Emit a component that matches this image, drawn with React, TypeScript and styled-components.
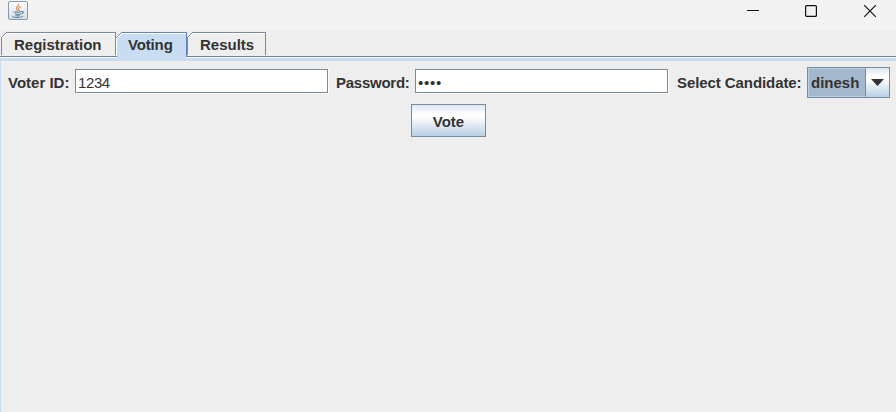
import React from "react";
import styled, { createGlobalStyle } from "styled-components";

const Global = createGlobalStyle`
  * { box-sizing: border-box; }
  body { margin: 0; background: #eeeeee; overflow: hidden; }
`;

const Frame = styled.div`
  width: 896px;
  height: 412px;
  display: flex;
  flex-direction: column;
  background: #eeeeee;
  color: #333333;
  font: bold 15px/18px "Liberation Sans", Arial, sans-serif;
`;

const TitleBar = styled.header`
  height: 30px;
  flex: none;
  display: flex;
  justify-content: space-between;
  padding: 1px 19px 0 8px;
  background: #f3f3f3;
`;

const WindowButtons = styled.div`
  display: flex;
  gap: 44px;
  padding-top: 3px;
`;

const WindowButton = styled.button`
  width: 14px;
  height: 14px;
  padding: 0;
  border: 0;
  background: none;
  svg { display: block; }

  &:last-child { margin-left: 1px; }
`;

const TabStrip = styled.nav`
  height: 26px;
  flex: none;
  display: flex;
  align-items: flex-start;
  padding: 2px 0 0 1px;
`;

const Tab = styled.button<{ $width: number; $active?: boolean }>`
  position: relative;
  display: flex;
  align-items: flex-start;
  width: ${(p) => p.$width}px;
  height: ${(p) => (p.$active ? 25 : 23)}px;
  padding: 3px 0 0 ${(p) => (p.$active ? 12 : 13)}px;
  border: 0;
  border-top: 1px solid ${(p) => (p.$active ? "#6382bf" : "#7a8a99")};
  border-right: 1px solid ${(p) => (p.$active ? "#6382bf" : "#7a8a99")};
  background: ${(p) => (p.$active ? "#c8ddf2" : "#eeeeee")};
  box-shadow: inset 1px 1px #ffffff;
  color: inherit;
  font: inherit;
  letter-spacing: ${(p) => (p.$active ? "-0.15px" : "0")};
  white-space: nowrap;

  &::before {
    content: "";
    position: absolute;
    left: 0;
    top: -1px;
    width: 6px;
    height: 6px;
    background: linear-gradient(
      135deg,
      #eeeeee 42%,
      #7a8a99 43% 53%,
      #ffffff 54% 66%,
      transparent 67%
    );
  }

  &::after {
    content: "";
    position: absolute;
    left: 0;
    top: 5px;
    bottom: 0;
    width: 1px;
    background: ${(p) => (p.$active ? "transparent" : "#7a8a99")};
  }
`;

const TabLine = styled.div`
  height: 5px;
  flex: none;
  background: linear-gradient(
    #6c7fa8 0 1px,
    #ffffff 1px 2px,
    #c8ddf2 2px 5px
  );
  position: relative;

  /* The selected tab runs through the line into the panel's edge. */
  &::before {
    content: "";
    position: absolute;
    left: 117px;
    top: -1px;
    width: 69px;
    height: 5px;
    background: #c8ddf2;
  }
`;

const Panel = styled.main`
  flex: 1;
  border-left: 1px solid #c8ddf2;
  padding: 6px 0 0 7px;
`;

const FormRow = styled.form`
  display: flex;
  align-items: center;
  height: 31px;
`;

const Label = styled.label<{ $width: number; $tracking?: number }>`
  width: ${(p) => p.$width}px;
  flex: none;
  letter-spacing: ${(p) => p.$tracking ?? 0}px;
  white-space: nowrap;
`;

const Field = styled.input<{ $gap: number; $tracking?: number }>`
  width: 253px;
  height: 24px;
  flex: none;
  margin: -3px ${(p) => p.$gap}px 0 0;
  padding: 3px 2px 1px;
  border: 1px solid #7a8a99;
  border-radius: 0;
  outline: 0;
  background: #ffffff;
  box-shadow: 1px 1px #ffffff;
  color: #333333;
  font: 15px/18px "Liberation Sans", Arial, sans-serif;
  letter-spacing: ${(p) => p.$tracking ?? 0}px;
`;

const Combo = styled.button`
  display: flex;
  width: 83px;
  height: 31px;
  padding: 0;
  border: 1px solid #7a8a99;
  background: #a3b8cc;
  color: inherit;
  font: inherit;
`;

const ComboValue = styled.span`
  width: 58px;
  height: 29px;
  padding: 5px 0 0 2px;
  border: 1px solid #b8cfe5;
  border-right-color: #7a8a99;
  text-align: left;
`;

const ComboArrow = styled.span`
  flex: 1;
  height: 29px;
  display: flex;
  align-items: center;
  justify-content: center;
  background: linear-gradient(#dde8f3, #ffffff 30%, #ffffff 40%, #b8cfe5);
`;

const ButtonRow = styled.div`
  display: flex;
  justify-content: center;
  padding: 6px 7px 0 0;
`;

const VoteButton = styled.button`
  width: 75px;
  height: 33px;
  padding: 2px 0 0;
  border: 1px solid #7a8a99;
  background: linear-gradient(#dde8f3, #ffffff 30%, #ffffff 38%, #b8cfe5);
  color: inherit;
  font: inherit;
`;

const JavaIcon = () => (
  <svg width="20" height="20" viewBox="0 0 20 20" fill="none">
    <defs>
      <linearGradient id="tile" x1="0" y1="0" x2="0" y2="1">
        <stop stopColor="#ffffff" />
        <stop offset="1" stopColor="#d4dce5" />
      </linearGradient>
    </defs>
    <rect x=".5" y=".5" width="19" height="18" rx="1.5" fill="url(#tile)" stroke="#8999ad" />
    <path d="M10.5 2.5C11.5 5 7.5 6 8.5 8c.4.8 1 1 1 2M13 5.5c-3 1.2-3 2.3-2 3.4.5.6 0 1.2-.3 1.6" stroke="#df9064" strokeWidth="1.2" />
    <path d="M6 10.5c-1 .8 6 .8 7.5 0M7 12.7c1.5.8 4 .8 5.8 0M7.5 14.5c1.5.6 3 .6 4.5 0M13.5 10.5c3-.3 2 2-.2 2.5M5 15.2c-2 1.2 7 2 10 .2" stroke="#64839f" strokeWidth="1.1" />
  </svg>
);

export default function App() {
  return (
    <>
      <Global />
      <Frame>
        <TitleBar>
          <JavaIcon />
          <WindowButtons>
            <WindowButton aria-label="Minimize">
              <svg width="14" height="14"><path d="M1 6.5h12" stroke="#111" /></svg>
            </WindowButton>
            <WindowButton aria-label="Maximize">
              <svg width="14" height="14"><rect x="1.6" y="1.6" width="10.8" height="10.8" rx="1" fill="none" stroke="#111" strokeWidth="1.2" /></svg>
            </WindowButton>
            <WindowButton aria-label="Close">
              <svg width="14" height="14"><path d="M1.2 1.2 12.8 12.8M12.8 1.2 1.2 12.8" stroke="#111" strokeWidth="1.2" /></svg>
            </WindowButton>
          </WindowButtons>
        </TitleBar>
        <TabStrip>
          <Tab $width={115}>Registration</Tab>
          <Tab $width={71} $active>Voting</Tab>
          <Tab $width={79}>Results</Tab>
        </TabStrip>
        <TabLine />
        <Panel>
          <FormRow>
            <Label htmlFor="voter" $width={67}>Voter ID:</Label>
            <Field id="voter" $gap={8} defaultValue="1234" $tracking={-0.4} />
            <Label htmlFor="password" $width={79} $tracking={-0.25}>Password:</Label>
            <Field id="password" $gap={9} defaultValue="••••" $tracking={0.75} />
            <Label $width={130} $tracking={-0.08}>Select Candidate:</Label>
            <Combo type="button">
              <ComboValue>dinesh</ComboValue>
              <ComboArrow>
                <svg width="13" height="7"><path d="M0 0h13L6.5 7z" fill="#333" /></svg>
              </ComboArrow>
            </Combo>
          </FormRow>
          <ButtonRow>
            <VoteButton>Vote</VoteButton>
          </ButtonRow>
        </Panel>
      </Frame>
    </>
  );
}
